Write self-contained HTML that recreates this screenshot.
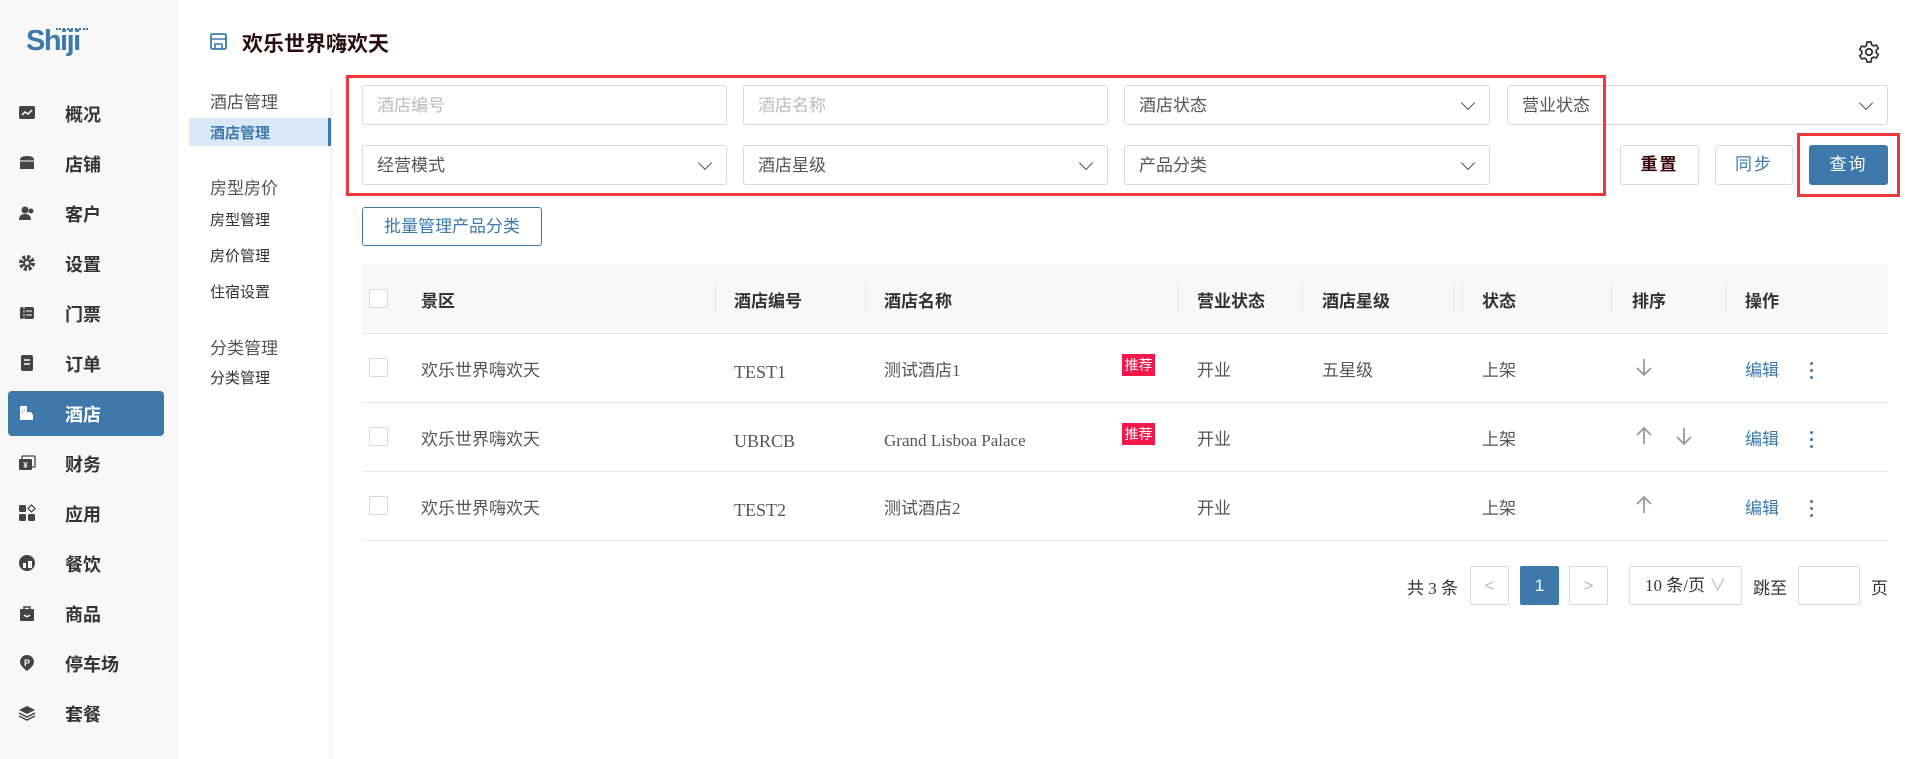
<!DOCTYPE html>
<html><head><meta charset="utf-8">
<style>
*{box-sizing:border-box;margin:0;padding:0}
body{width:1910px;height:759px;overflow:hidden;background:#fff;font-family:"Liberation Sans","Noto Sans CJK SC",sans-serif;color:#333;position:relative}
.abs{position:absolute}
.side{left:0;top:0;width:179px;height:759px;background:#f8f8f8}
.nav{left:8px;width:156px;height:45px;display:flex;align-items:center;font-size:18px;font-weight:bold;color:#333;border-radius:4px}
.nav .ic{position:absolute;left:10px;top:13px;width:18px;height:18px}
.nav span.t{position:absolute;left:57px}
.nav.act{background:#3d7aab;color:#fff}
.sub{font-size:15px;color:#333}
.subh{font-size:17px;color:#555}
.inp{height:40px;border:1px solid #d9d9d9;border-radius:3px;font-size:17px;color:#bbb;padding-left:14px;line-height:40px}
.sel{color:#555}
.sel:after{content:"";position:absolute;right:16px;top:12px;width:9px;height:9px;border-right:1.5px solid #555;border-bottom:1.5px solid #555;transform:rotate(45deg)}
.btn{height:40px;border:1px solid #d9d9d9;border-radius:3px;font-size:17px;text-align:center;line-height:38px}
.cell{font-family:"Liberation Serif","Noto Sans CJK SC",serif;font-size:17px;color:#555}
.lat{font-family:"Liberation Serif",serif;font-size:18px;color:#555}
.th{font-size:17px;font-weight:bold;color:#333}
.cb{width:19px;height:19px;border:1px solid #d9d9d9;border-radius:2px;background:#fff}
.hl{height:1px;background:#e8e8e8;left:362px;width:1526px}
.vs{width:1px;height:27px;background:#e6e6e6;top:285px}
.tag{background:#f5174a;color:#fff;font-size:14px;width:33px;height:22px;line-height:22px;text-align:center}
.edit{color:#3d7aab;font-size:17px}
.dots{width:3px}
.dots i{display:block;width:3px;height:3px;background:#3d7aab;border-radius:50%;margin-bottom:4px}
.pg{height:39px;border:1px solid #d9d9d9;border-radius:2px;text-align:center;line-height:37px;font-size:17px;color:#bbb}
</style></head><body>
<svg width="0" height="0" style="position:absolute"><defs>
<symbol id="dn" viewBox="0 0 18 20"><path d="M9 2v16M2 11l7 7 7-7" stroke="#999" stroke-width="1.8" fill="none"/></symbol>
<symbol id="up" viewBox="0 0 18 20"><path d="M9 18V2M2 9l7-7 7 7" stroke="#999" stroke-width="1.8" fill="none"/></symbol>
</defs></svg>
<div class="abs side"></div>
<div class="abs" style="left:26px;top:25px;font-size:29px;font-weight:bold;color:#3d7aab;letter-spacing:-1.5px">Shiji</div>
<div class="abs" style="left:56px;top:28px;width:32px;border-top:2px dotted #3d7aab"></div>

<div class="abs nav" style="top:91px"><svg class="ic" viewBox="0 0 18 18"><rect x="1" y="2" width="16" height="13" rx="2" fill="#444"/><path d="M4 11l3-3 3 2 4-4" stroke="#fff" stroke-width="1.5" fill="none"/></svg><span class="t">概况</span></div>
<div class="abs nav" style="top:141px"><svg class="ic" viewBox="0 0 18 18"><path d="M2 6q0-4 7-4t7 4v9H2z" fill="#444"/><path d="M2 7h14" stroke="#fff"/></svg><span class="t">店铺</span></div>
<div class="abs nav" style="top:191px"><svg class="ic" viewBox="0 0 18 18"><circle cx="7" cy="6" r="3.5" fill="#444"/><path d="M1 16q0-6 6-6t6 6z" fill="#444"/><circle cx="13" cy="7" r="2.5" fill="#444"/></svg><span class="t">客户</span></div>
<div class="abs nav" style="top:241px"><svg class="ic" viewBox="0 0 18 18"><circle cx="9" cy="9" r="6" fill="none" stroke="#444" stroke-width="4" stroke-dasharray="3 1.7"/><circle cx="9" cy="9" r="4" fill="#444"/><circle cx="9" cy="9" r="2" fill="#f8f8f8"/></svg><span class="t">设置</span></div>
<div class="abs nav" style="top:291px"><svg class="ic" viewBox="0 0 18 18"><rect x="2" y="3" width="14" height="12" rx="2" fill="#444"/><path d="M6 3v12" stroke="#f8f8f8" stroke-dasharray="2 1.5"/><path d="M8 7h6M8 11h6" stroke="#f8f8f8"/></svg><span class="t">门票</span></div>
<div class="abs nav" style="top:341px"><svg class="ic" viewBox="0 0 18 18"><rect x="3" y="1" width="12" height="16" rx="2" fill="#444"/><path d="M6 6h6M6 10h6" stroke="#fff" stroke-width="1.5"/></svg><span class="t">订单</span></div>
<div class="abs nav act" style="top:391px"><svg class="ic" viewBox="0 0 18 18"><path d="M2 2h7v14H2zM9 8h4l2 3v5H9z" fill="#fff"/><path d="M4 6h1M4 9h1M6 6h1" stroke="#3d7aab"/></svg><span class="t">酒店</span></div>
<div class="abs nav" style="top:441px"><svg class="ic" viewBox="0 0 18 18"><rect x="4" y="2" width="13" height="11" rx="1" fill="none" stroke="#444" stroke-width="1.3"/><rect x="1" y="5" width="13" height="11" rx="1" fill="#444"/><text x="7.5" y="14" font-size="8" fill="#fff" text-anchor="middle">¥</text></svg><span class="t">财务</span></div>
<div class="abs nav" style="top:491px"><svg class="ic" viewBox="0 0 18 18"><rect x="1" y="1" width="7" height="7" rx="1.5" fill="#444"/><rect x="1" y="10" width="7" height="7" rx="1.5" fill="#444"/><rect x="10" y="10" width="7" height="7" rx="1.5" fill="#444"/><rect x="11" y="2" width="5" height="5" transform="rotate(45 13.5 4.5)" fill="none" stroke="#444" stroke-width="1.2"/></svg><span class="t">应用</span></div>
<div class="abs nav" style="top:541px"><svg class="ic" viewBox="0 0 18 18"><circle cx="9" cy="9" r="8" fill="#444"/><path d="M5 9h3v5H5zM10 7h4v7h-4z" fill="#fff"/></svg><span class="t">餐饮</span></div>
<div class="abs nav" style="top:591px"><svg class="ic" viewBox="0 0 18 18"><path d="M6 5V3h6v2" stroke="#444" stroke-width="1.5" fill="none"/><rect x="2" y="5" width="14" height="12" rx="1" fill="#444"/><path d="M6 11q3 3 6 0" stroke="#fff" stroke-width="1.3" fill="none"/></svg><span class="t">商品</span></div>
<div class="abs nav" style="top:641px"><svg class="ic" viewBox="0 0 18 18"><path d="M9 1a7 7 0 0 1 7 7c0 4-7 9-7 9s-7-5-7-9a7 7 0 0 1 7-7z" fill="#444"/><text x="9" y="12" font-size="9" fill="#fff" text-anchor="middle" font-weight="bold">P</text></svg><span class="t">停车场</span></div>
<div class="abs nav" style="top:691px"><svg class="ic" viewBox="0 0 18 18"><path d="M9 2l8 4-8 4-8-4z" fill="#444"/><path d="M1 9l8 4 8-4M1 12l8 4 8-4" stroke="#444" stroke-width="1.5" fill="none"/></svg><span class="t">套餐</span></div>

<svg class="abs" style="left:209px;top:32px" width="19" height="19" viewBox="0 0 19 19"><rect x="2" y="2" width="15" height="15" rx="1.5" fill="none" stroke="#3d7aab" stroke-width="1.8"/><path d="M2 7h15M6 17v-5h7v5" stroke="#3d7aab" stroke-width="1.6" fill="none"/></svg>
<div class="abs" style="left:242px;top:28px;font-size:21px;font-weight:bold;color:#2a0d0d">欢乐世界嗨欢天</div>
<svg class="abs" style="left:1857px;top:40px" width="24" height="24" viewBox="0 0 24 24"><circle cx="12" cy="12" r="3.2" fill="none" stroke="#333" stroke-width="1.8"/><path d="M10 2h4l.6 2.8 2 1.1 2.7-.9 2 3.4-2.1 1.9v2.4l2.1 1.9-2 3.4-2.7-.9-2 1.1L14 22h-4l-.6-2.8-2-1.1-2.7.9-2-3.4 2.1-1.900v-2.4L2.7 9.4l2-3.4 2.7.9 2-1.1z" fill="none" stroke="#333" stroke-width="1.7" stroke-linejoin="round"/></svg>

<div class="abs subh" style="left:210px;top:88px">酒店管理</div>
<div class="abs" style="left:189px;top:118px;width:142px;height:28px;background:#d9e9f7;border-right:3px solid #3d7aab"></div>
<div class="abs sub" style="left:210px;top:122px;color:#3d7aab;font-weight:bold">酒店管理</div>
<div class="abs subh" style="left:210px;top:174px">房型房价</div>
<div class="abs sub" style="left:210px;top:209px">房型管理</div>
<div class="abs sub" style="left:210px;top:245px">房价管理</div>
<div class="abs sub" style="left:210px;top:281px">住宿设置</div>
<div class="abs subh" style="left:210px;top:334px">分类管理</div>
<div class="abs sub" style="left:210px;top:367px">分类管理</div>
<div class="abs" style="left:331px;top:86px;width:1px;height:673px;background:#eee"></div>

<div class="abs inp" style="left:362px;top:85px;width:365px">酒店编号</div>
<div class="abs inp" style="left:743px;top:85px;width:365px">酒店名称</div>
<div class="abs inp sel" style="left:1124px;top:85px;width:366px">酒店状态</div>
<div class="abs inp sel" style="left:1507px;top:85px;width:381px">营业状态</div>
<div class="abs inp sel" style="left:362px;top:145px;width:365px">经营模式</div>
<div class="abs inp sel" style="left:743px;top:145px;width:365px">酒店星级</div>
<div class="abs inp sel" style="left:1124px;top:145px;width:366px">产品分类</div>
<div class="abs" style="left:346px;top:75px;width:1260px;height:121px;border:3px solid #f0373a"></div>

<div class="abs btn" style="left:1620px;top:145px;width:79px;color:#3a0505;font-weight:bold;letter-spacing:2px">重置</div>
<div class="abs btn" style="left:1715px;top:145px;width:78px;color:#3d7aab;letter-spacing:2px">同步</div>
<div class="abs btn" style="left:1809px;top:145px;width:79px;background:#3d7aab;border-color:#3d7aab;color:#fff;letter-spacing:2px">查询</div>
<div class="abs" style="left:1797px;top:133px;width:103px;height:64px;border:3px solid #f0373a"></div>

<div class="abs btn" style="left:362px;top:207px;width:180px;height:39px;border-color:#3d7aab;color:#3d7aab;line-height:37px">批量管理产品分类</div>

<div class="abs" style="left:362px;top:264px;width:1526px;height:69px;background:#f8f8f8"></div>
<div class="abs hl" style="top:333px"></div>
<div class="abs hl" style="top:402px"></div>
<div class="abs hl" style="top:471px"></div>
<div class="abs hl" style="top:540px"></div>
<div class="abs vs" style="left:715px"></div><div class="abs vs" style="left:865px"></div><div class="abs vs" style="left:1178px"></div><div class="abs vs" style="left:1302px"></div><div class="abs vs" style="left:1453px"></div><div class="abs vs" style="left:1462px"></div><div class="abs vs" style="left:1611px"></div><div class="abs vs" style="left:1725px"></div>

<div class="abs cb" style="left:369px;top:289px"></div>
<div class="abs th" style="left:421px;top:287px">景区</div>
<div class="abs th" style="left:734px;top:287px">酒店编号</div>
<div class="abs th" style="left:884px;top:287px">酒店名称</div>
<div class="abs th" style="left:1197px;top:287px">营业状态</div>
<div class="abs th" style="left:1322px;top:287px">酒店星级</div>
<div class="abs th" style="left:1482px;top:287px">状态</div>
<div class="abs th" style="left:1632px;top:287px">排序</div>
<div class="abs th" style="left:1745px;top:287px">操作</div>

<!-- row1 -->
<div class="abs cb" style="left:369px;top:358px"></div>
<div class="abs cell" style="left:421px;top:356px">欢乐世界嗨欢天</div>
<div class="abs lat" style="left:734px;top:362px">TEST1</div>
<div class="abs cell" style="left:884px;top:356px">测试酒店1</div>
<div class="abs tag" style="left:1122px;top:354px">推荐</div>
<div class="abs cell" style="left:1197px;top:356px">开业</div>
<div class="abs cell" style="left:1322px;top:356px">五星级</div>
<div class="abs cell" style="left:1482px;top:356px">上架</div>
<svg class="abs" style="left:1635px;top:357px" width="18" height="20"><use href="#dn"/></svg>
<div class="abs edit" style="left:1745px;top:356px">编辑</div>
<div class="abs dots" style="left:1810px;top:362px"><i></i><i></i><i></i></div>
<!-- row2 -->
<div class="abs cb" style="left:369px;top:427px"></div>
<div class="abs cell" style="left:421px;top:425px">欢乐世界嗨欢天</div>
<div class="abs lat" style="left:734px;top:431px">UBRCB</div>
<div class="abs lat" style="left:884px;top:431px;font-size:17px">Grand Lisboa Palace</div>
<div class="abs tag" style="left:1122px;top:423px">推荐</div>
<div class="abs cell" style="left:1197px;top:425px">开业</div>
<div class="abs cell" style="left:1482px;top:425px">上架</div>
<svg class="abs" style="left:1635px;top:426px" width="18" height="20"><use href="#up"/></svg>
<svg class="abs" style="left:1675px;top:426px" width="18" height="20"><use href="#dn"/></svg>
<div class="abs edit" style="left:1745px;top:425px">编辑</div>
<div class="abs dots" style="left:1810px;top:431px"><i></i><i></i><i></i></div>
<!-- row3 -->
<div class="abs cb" style="left:369px;top:496px"></div>
<div class="abs cell" style="left:421px;top:494px">欢乐世界嗨欢天</div>
<div class="abs lat" style="left:734px;top:500px">TEST2</div>
<div class="abs cell" style="left:884px;top:494px">测试酒店2</div>
<div class="abs cell" style="left:1197px;top:494px">开业</div>
<div class="abs cell" style="left:1482px;top:494px">上架</div>
<svg class="abs" style="left:1635px;top:495px" width="18" height="20"><use href="#up"/></svg>
<div class="abs edit" style="left:1745px;top:494px">编辑</div>
<div class="abs dots" style="left:1810px;top:500px"><i></i><i></i><i></i></div>

<div class="abs cell" style="left:1407px;top:574px;color:#333">共 3 条</div>
<div class="abs pg" style="left:1470px;top:566px;width:39px">&lt;</div>
<div class="abs pg" style="left:1520px;top:566px;width:39px;background:#3d7aab;border-color:#3d7aab;color:#fff">1</div>
<div class="abs pg" style="left:1569px;top:566px;width:39px">&gt;</div>
<div class="abs pg cell" style="left:1629px;top:566px;width:113px;color:#333;text-align:left;padding-left:15px;font-size:17px">10 条/页 <span style="color:#bbb">∨</span></div>
<div class="abs cell" style="left:1753px;top:574px;color:#333">跳至</div>
<div class="abs pg" style="left:1798px;top:566px;width:62px"></div>
<div class="abs cell" style="left:1871px;top:574px;color:#333">页</div>
</body></html>
